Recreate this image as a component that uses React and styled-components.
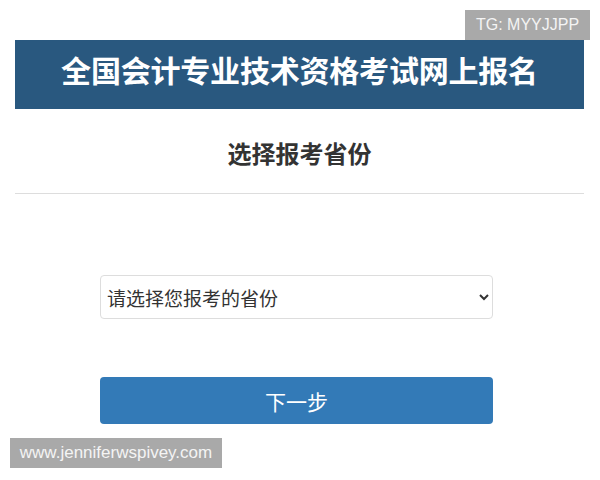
import styled, { createGlobalStyle } from "styled-components";

const GlobalStyle = createGlobalStyle`
body {
margin: 0;
background: #fff;
font-family: "Noto Sans CJK SC", "Noto Sans", sans-serif;
}
`

const provinces = ["北京", "天津", "河北", "山西", "内蒙古", "辽宁", "吉林", "黑龙江", "上海", "江苏", "浙江"]

const App = () => {
    return (
        <>
            <GlobalStyle />
            <Page>
                <Banner>
                    <Title>全国会计专业技术资格考试网上报名</Title>
                </Banner>
                <Heading>选择报考省份</Heading>
                <Form>
                    <Select defaultValue="">
                        <option value="" disabled>请选择您报考的省份</option>
                        {provinces.map((p) => <option key={p} value={p}>{p}</option>)}
                    </Select>
                    <NextButton type="button">下一步</NextButton>
                </Form>
            </Page>
            <Tag top="10px" left="465px" width="125px">TG: MYYJJPP</Tag>
            <Tag top="438px" left="10px" width="212px" size="17px">www.jenniferwspivey.com</Tag>
        </>
    )
}

const Page = styled.div`
width: 569px;
padding: 40px 16px 0 15px;
`

const Banner = styled.div`
height: 69px;
background-color: #29587f;
display: flex;
justify-content: center;
align-items: flex-start;
padding-top: 11px;
box-sizing: border-box;
`

const Title = styled.h1`
margin: 0;
color: #fff;
font-size: 30px;
line-height: 36px;
font-weight: 700;
letter-spacing: -0.2px;
`

const Heading = styled.h2`
margin: 0;
height: 85px;
box-sizing: border-box;
padding-top: 29px;
text-align: center;
color: #333;
font-size: 24px;
line-height: 30px;
font-weight: 700;
border-bottom: 1px solid #ddd;
`

const Form = styled.div`
display: flex;
flex-direction: column;
gap: 58px;
width: 393px;
margin-left: 85px;
padding-top: 81px;
`

const Select = styled.select`
height: 44px;
width: 100%;
padding: 0 4px 0 2px;
border: 1px solid #ddd;
border-radius: 4px;
background: #fff;
color: #333;
font-family: "Noto Sans CJK SC", sans-serif;
font-size: 19px;
outline: none;
`

const NextButton = styled.button`
height: 47px;
border: none;
border-radius: 4px;
background-color: #337ab7;
color: #fff;
font-family: "Noto Sans CJK SC", sans-serif;
font-size: 21px;
cursor: pointer;
`

const Tag = styled.div`
position: absolute;
top: ${(p) => p.top};
left: ${(p) => p.left};
width: ${(p) => p.width};
height: 30px;
display: flex;
align-items: center;
justify-content: center;
background-color: #a9a9a9;
color: #f4f4f4;
font-family: "Liberation Sans", Arial, sans-serif;
font-size: ${(p) => p.size || "16px"};
`

export default App
